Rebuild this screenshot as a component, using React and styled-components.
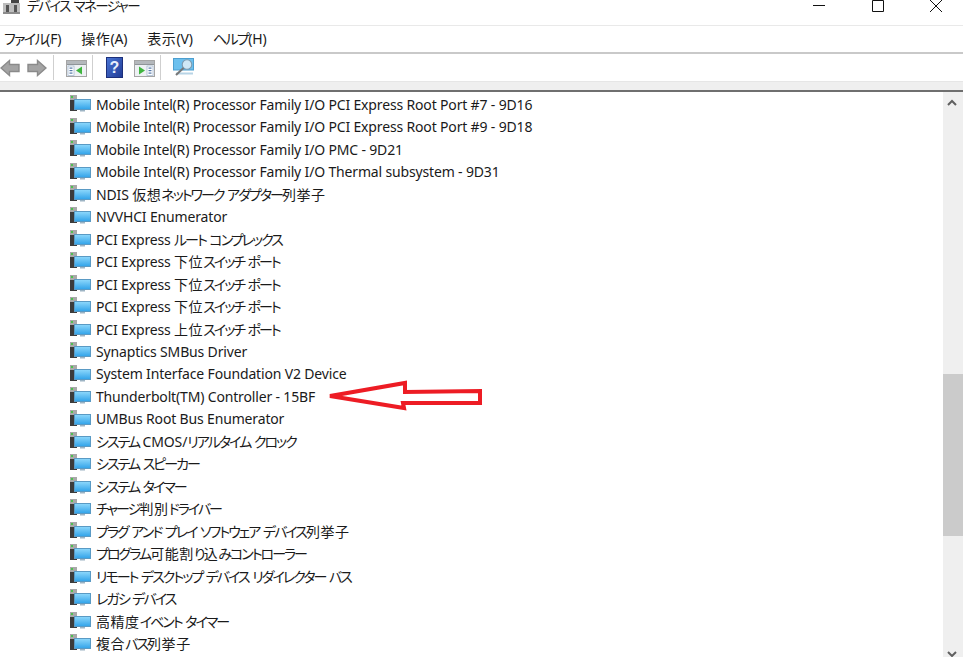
import React from "react";
import styled, { createGlobalStyle } from "styled-components";

const Global = createGlobalStyle`
  html, body { margin: 0; padding: 0; background: #fff; height: 657px; overflow: hidden; }
  #root { height: 657px; }
`;

const FONT = `"Noto Sans", "Noto Sans CJK JP", sans-serif`;

const Win = styled.div`
  position: relative;
  width: 963px;
  height: 657px;
  overflow: hidden;
  display: flex;
  flex-direction: column;
  font-family: ${FONT};
  font-feature-settings: "palt";
  color: #1a1a1a;
  background: #fff;
`;
const TitleBar = styled.div`
  height: 25px;
  display: flex;
  align-items: flex-start;
  border-bottom: 1px solid #e9e9e9;
  flex: none;
`;
const AppIcon = styled.svg`
  width: 20px;
  height: 15px;
  margin-left: 3px;
  flex: none;
`;
const Kana = styled.span`
  letter-spacing: -0.14em;
`;
const Kanji = styled.span`
  letter-spacing: 0.04em;
`;
const Title = styled.div`
  font-size: 13.5px;
  line-height: 12px;
  margin-left: 4px;
  ${Kana} {
    letter-spacing: -0.114em;
  }
`;
const WinButtons = styled.div`
  margin-left: auto;
  display: flex;
  gap: 38.5px;
  padding-right: 17px;
`;
const WinBtn = styled.svg`
  width: 20px;
  height: 14px;
  display: block;
`;
const MenuBar = styled.div`
  height: 26px;
  display: flex;
  align-items: center;
  padding-left: 4px;
  gap: 20px;
  border-bottom: 2px solid #c9c9c9;
  flex: none;
  font-size: 14px;
  letter-spacing: -0.16px;
  ${Kana} {
    letter-spacing: -0.114em;
  }
`;
const MenuItem = styled.span`
  white-space: nowrap;
  position: relative;
  top: -1px;
`;
const ToolBar = styled.div`
  height: 27px;
  display: flex;
  align-items: center;
  flex: none;
`;
const ToolIcon = styled.svg`
  display: block;
  flex: none;
  margin-left: ${(p) => p.$ml || 0}px;
`;
const WindowGlyph = styled(ToolIcon)`
  margin-top: 2px;
`;
const Sep = styled.div`
  width: 1px;
  height: 25px;
  background: #cfcfcf;
  margin-left: ${(p) => p.$ml}px;
  flex: none;
`;
const Strip = styled.div`
  height: 8px;
  background: #efefef;
  border-top: 1px solid #e6e6e6;
  border-bottom: 2px solid #6f6f6f;
  flex: none;
`;
const Body = styled.div`
  flex: 1;
  min-height: 0;
  display: flex;
`;
const Tree = styled.div`
  flex: 1;
  padding: 1px 0 0 69px;
  overflow: hidden;
`;
const Row = styled.div`
  height: 22.46px;
  display: flex;
  align-items: center;
  font-size: 14px;
  letter-spacing: -0.16px;
  white-space: pre;
`;
const RowIcon = styled.svg`
  width: 22px;
  height: 18px;
  margin-right: 5px;
  flex: none;
`;
const Scrollbar = styled.div`
  width: 20px;
  background: #efefef;
  display: flex;
  flex-direction: column;
  align-items: stretch;
  flex: none;
  margin-bottom: -6px;
`;
const ScrollArrow = styled.svg`
  width: 20px;
  height: 18px;
  flex: none;
  display: block;
`;
const Track = styled.div`
  flex: 1;
  padding-top: 264px;
`;
const Thumb = styled.div`
  height: 162px;
  background: #cbcbcb;
`;
const Arrow = styled.svg`
  position: absolute;
  left: 320px;
  top: 375px;
  width: 170px;
  height: 40px;
`;

const rows = [
  "Mobile Intel(R) Processor Family I/O PCI Express Root Port #7 - 9D16",
  "Mobile Intel(R) Processor Family I/O PCI Express Root Port #9 - 9D18",
  "Mobile Intel(R) Processor Family I/O PMC - 9D21",
  "Mobile Intel(R) Processor Family I/O Thermal subsystem - 9D31",
  "NDIS 仮想ネットワーク アダプター列挙子",
  "NVVHCI Enumerator",
  "PCI Express ルート コンプレックス",
  "PCI Express 下位スイッチ ポート",
  "PCI Express 下位スイッチ ポート",
  "PCI Express 下位スイッチ ポート",
  "PCI Express 上位スイッチ ポート",
  "Synaptics SMBus Driver",
  "System Interface Foundation V2 Device",
  "Thunderbolt(TM) Controller - 15BF",
  "UMBus Root Bus Enumerator",
  "システム CMOS/リアルタイム クロック",
  "システム スピーカー",
  "システム タイマー",
  "チャージ判別ドライバー",
  "プラグ アンド プレイ ソフトウェア デバイス列挙子",
  "プログラム可能割り込みコントローラー",
  "リモート デスクトップ デバイス リダイレクター バス",
  "レガシ デバイス",
  "高精度イベント タイマー",
  "複合バス列挙子",
];

// Yu Gothic UI sets kana narrower than kanji: split a label into runs so each run gets its own tracking.
const Jp = ({ children }) => {
  const parts = children.split(/([\u3040-\u30ff]+|[\u4e00-\u9fff]+)/).filter(Boolean);
  return (
    <span>
      {parts.map((p, i) => {
        if (/^[\u3040-\u30ff]/.test(p)) return <Kana key={i}>{p}</Kana>;
        if (/^[\u4e00-\u9fff]/.test(p)) return <Kanji key={i}>{p}</Kanji>;
        return <React.Fragment key={i}>{p}</React.Fragment>;
      })}
    </span>
  );
};

const DeviceIcon = () => (
  <RowIcon viewBox="0 0 22 18">
    <defs>
      <linearGradient id="scr" x1="0" y1="0" x2="0" y2="1">
        <stop offset="0" stopColor="#8ad6fb" />
        <stop offset="1" stopColor="#35a5ea" />
      </linearGradient>
    </defs>
    <rect x="1" y="0" width="7" height="16" fill="#a9a9a9" />
    <rect x="1" y="5" width="7" height="11" fill="#3c3c3c" />
    <rect x="2" y="1" width="2" height="2" fill="#4fc04f" />
    <rect x="5" y="4" width="17" height="11" fill="#5a9ac4" />
    <rect x="6" y="5" width="15" height="9" fill="url(#scr)" />
    <rect x="11" y="15" width="5" height="1.5" fill="#9db4c4" />
  </RowIcon>
);

const WindowIcon = ({ flip, ml }) => (
  <WindowGlyph $ml={ml} width="21" height="17" viewBox="0 0 21 17">
    <rect x="0.5" y="0.5" width="20" height="16" fill="#eef1f4" stroke="#a5a5a5" />
    <rect x="1" y="1" width="19" height="3" fill="#b4b8bc" />
    <rect x="1" y="4" width="19" height="1" fill="#8f9498" />
    <rect x={flip ? 13 : 2} y="6" width="6" height="9.5" fill="#fff" stroke="#9db3cc" strokeWidth="0.7" />
    <rect x={flip ? 14.5 : 3.5} y="7.5" width="3" height="1.2" fill="#5578a8" />
    <rect x={flip ? 14.5 : 3.5} y="10" width="3" height="1.2" fill="#5578a8" />
    <rect x={flip ? 14.5 : 3.5} y="12.5" width="3" height="1.2" fill="#5578a8" />
    {flip ? (
      <path d="M5 6.5 L11 10.5 L5 14.5 Z" fill="#3fb53f" />
    ) : (
      <path d="M16 6.5 L10 10.5 L16 14.5 Z" fill="#3fb53f" />
    )}
  </WindowGlyph>
);

const NavArrow = ({ left, ml }) => (
  <ToolIcon $ml={ml} width="20" height="18" viewBox="0 0 20 18">
    <g transform={left ? "" : "translate(20 0) scale(-1 1)"}>
      <path
        d="M9.5 1.5 L1 9 L9.5 16.5 L9.5 12.5 L19 12.5 L19 5.5 L9.5 5.5 Z"
        fill="#a4a4a4"
        stroke="#8a8a8a"
        strokeWidth="1.4"
      />
    </g>
  </ToolIcon>
);

export default function App() {
  return (
    <Win>
      <Global />
      <TitleBar>
        <AppIcon viewBox="0 0 20 15">
          <rect x="8" y="-2" width="8" height="5" fill="#444" />
          <rect x="0" y="3" width="17" height="11" fill="#bdbdbd" />
          <rect x="3" y="5" width="3" height="7" fill="#555" />
          <rect x="11" y="5" width="3" height="7" fill="#555" />
          <rect x="0" y="12" width="17" height="2" fill="#8c8c8c" />
        </AppIcon>
        <Title>
          <Jp>デバイス マネージャー</Jp>
        </Title>
        <WinButtons>
          <WinBtn viewBox="0 0 20 14">
            <path d="M4 5.5 H16" stroke="#111" strokeWidth="1" />
          </WinBtn>
          <WinBtn viewBox="0 0 20 14">
            <path d="M4.5 0.5 H15.5 V11.5 H4.5 Z" fill="none" stroke="#111" strokeWidth="1" />
          </WinBtn>
          <WinBtn viewBox="0 0 20 14">
            <path d="M4 0 L16 12 M16 0 L4 12" stroke="#111" strokeWidth="1" />
          </WinBtn>
        </WinButtons>
      </TitleBar>
      <MenuBar>
        <MenuItem><Jp>ファイル(F)</Jp></MenuItem>
        <MenuItem><Jp>操作(A)</Jp></MenuItem>
        <MenuItem><Jp>表示(V)</Jp></MenuItem>
        <MenuItem><Jp>ヘルプ(H)</Jp></MenuItem>
      </MenuBar>
      <ToolBar>
        <NavArrow left ml={0} />
        <NavArrow ml={7} />
        <Sep $ml={6} />
        <WindowIcon ml={12} />
        <Sep $ml={5} />
        <ToolIcon $ml={13} width="17" height="21" viewBox="0 0 17 21">
          <defs>
            <linearGradient id="hlp" x1="0" y1="0" x2="1" y2="1">
              <stop offset="0" stopColor="#4a76d6" />
              <stop offset="1" stopColor="#203a94" />
            </linearGradient>
          </defs>
          <rect x="0.5" y="0.5" width="16" height="20" fill="url(#hlp)" stroke="#1c2f7a" />
          <text x="8.5" y="16" textAnchor="middle" fontSize="16" fontWeight="700" fontFamily="Liberation Sans, sans-serif" fill="#e8eefb">?</text>
        </ToolIcon>
        <WindowIcon flip ml={11} />
        <Sep $ml={5} />
        <ToolIcon $ml={12} width="21" height="20" viewBox="0 0 21 20">
          <rect x="0.5" y="0.5" width="20" height="11.5" fill="#6cc0ee" stroke="#4d9fd0" />
          <rect x="3" y="14.5" width="17" height="2" fill="#b7d4e6" />
          <circle cx="14" cy="6.5" r="4.8" fill="#cfe8f6" stroke="#7d9bb0" strokeWidth="1.1" />
          <path d="M10.5 10 L3 17" stroke="#777" strokeWidth="2" />
        </ToolIcon>
      </ToolBar>
      <Strip />
      <Body>
        <Tree>
          {rows.map((t, i) => (
            <Row key={i}>
              <DeviceIcon />
              <Jp>{t}</Jp>
            </Row>
          ))}
        </Tree>
        <Scrollbar>
          <ScrollArrow viewBox="0 0 20 18">
            <path d="M5 13 L9 9 L13 13" fill="none" stroke="#606060" strokeWidth="2" />
          </ScrollArrow>
          <Track>
            <Thumb />
          </Track>
          <ScrollArrow viewBox="0 0 20 18">
            <path d="M5 7 L9 11 L13 7" fill="none" stroke="#606060" strokeWidth="2" />
          </ScrollArrow>
        </Scrollbar>
      </Body>
      <Arrow viewBox="0 0 170 40">
        <path
          d="M10 21 L85 8 L85 17 L160 16 L160 28 L83 28 L84 33 Z"
          fill="#fff"
          stroke="#ed1c24"
          strokeWidth="4"
          strokeLinejoin="miter"
        />
      </Arrow>
    </Win>
  );
}
